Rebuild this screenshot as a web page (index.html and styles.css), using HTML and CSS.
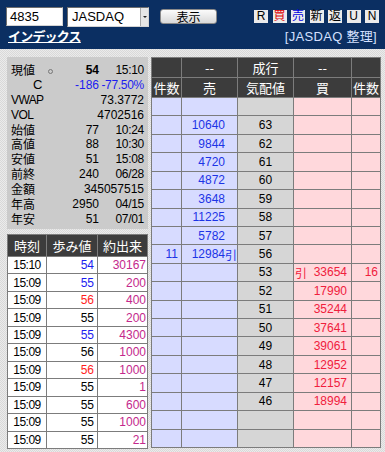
FILE: index.html
```html
<!DOCTYPE html>
<html lang="ja">
<head>
<meta charset="utf-8">
<title>4835 JASDAQ</title>
<link rel="stylesheet" href="styles.css">
</head>
<body>
<div class="topbar">
  <div class="row1">
    <div class="code">4835</div>
    <div class="select"><span class="val">JASDAQ</span><span class="arrow"></span></div>
    <div class="btn">表示</div>
    <div class="modes">
      <span class="mb">R</span>
      <span class="mb red">買</span>
      <span class="mb blue">売</span>
      <span class="mb">新</span>
      <span class="mb">返</span>
      <span class="mb">U</span>
      <span class="mb">N</span>
    </div>
  </div>
  <div class="row2">
    <span class="idx">インデックス</span>
    <span class="market">[JASDAQ 整理]</span>
  </div>
</div>

<div class="main">
  <div class="left">
    <div class="info">
      <div class="ir"><span class="lb">現値<span class="dot"></span></span><span class="iv b">54</span><span class="it">15:10</span></div>
      <div class="ir"><span class="lb ind">C</span><span class="iv blue">-186</span><span class="it blue">-77.50%</span></div>
      <div class="ir"><span class="lb lat">VWAP</span><span class="iv full">73.3772</span></div>
      <div class="ir"><span class="lb lat">VOL</span><span class="iv full">4702516</span></div>
      <div class="ir"><span class="lb">始値</span><span class="iv">77</span><span class="it">10:24</span></div>
      <div class="ir"><span class="lb">高値</span><span class="iv">88</span><span class="it">10:30</span></div>
      <div class="ir"><span class="lb">安値</span><span class="iv">51</span><span class="it">15:08</span></div>
      <div class="ir"><span class="lb">前終</span><span class="iv">240</span><span class="it">06/28</span></div>
      <div class="ir"><span class="lb">金額</span><span class="iv full">345057515</span></div>
      <div class="ir"><span class="lb">年高</span><span class="iv">2950</span><span class="it">04/15</span></div>
      <div class="ir"><span class="lb">年安</span><span class="iv">51</span><span class="it">07/01</span></div>
    </div>
    <div class="trades">
      <div class="th">時刻</div><div class="th">歩み値</div><div class="th">約出来</div>
      <div class="td t">15:10</div><div class="td p blue">54</div><div class="td v mag">30167</div>
      <div class="td t">15:09</div><div class="td p blue">55</div><div class="td v mag">200</div>
      <div class="td t">15:09</div><div class="td p red">56</div><div class="td v mag">400</div>
      <div class="td t">15:09</div><div class="td p">55</div><div class="td v mag">200</div>
      <div class="td t">15:09</div><div class="td p blue">55</div><div class="td v mag">4300</div>
      <div class="td t">15:09</div><div class="td p">56</div><div class="td v mag">1000</div>
      <div class="td t">15:09</div><div class="td p red">56</div><div class="td v mag">1000</div>
      <div class="td t">15:09</div><div class="td p">55</div><div class="td v mag">1</div>
      <div class="td t">15:09</div><div class="td p">55</div><div class="td v mag">600</div>
      <div class="td t">15:09</div><div class="td p">55</div><div class="td v mag">1000</div>
      <div class="td t">15:09</div><div class="td p">55</div><div class="td v mag">21</div>
    </div>
  </div>

  <div class="board">
    <div class="bh"></div><div class="bh">--</div><div class="bh">成行</div><div class="bh">--</div><div class="bh"></div>
    <div class="bh">件数</div><div class="bh">売</div><div class="bh">気配値</div><div class="bh">買</div><div class="bh">件数</div>

    <div class="sc"></div><div class="sv"></div><div class="pr"></div><div class="bv"></div><div class="bc"></div>
    <div class="sc"></div><div class="sv"><span>10640</span><i></i></div><div class="pr">63</div><div class="bv"></div><div class="bc"></div>
    <div class="sc"></div><div class="sv"><span>9844</span><i></i></div><div class="pr">62</div><div class="bv"></div><div class="bc"></div>
    <div class="sc"></div><div class="sv"><span>4720</span><i></i></div><div class="pr">61</div><div class="bv"></div><div class="bc"></div>
    <div class="sc"></div><div class="sv"><span>4872</span><i></i></div><div class="pr">60</div><div class="bv"></div><div class="bc"></div>
    <div class="sc"></div><div class="sv"><span>3648</span><i></i></div><div class="pr">59</div><div class="bv"></div><div class="bc"></div>
    <div class="sc"></div><div class="sv"><span>11225</span><i></i></div><div class="pr">58</div><div class="bv"></div><div class="bc"></div>
    <div class="sc"></div><div class="sv"><span>5782</span><i></i></div><div class="pr">57</div><div class="bv"></div><div class="bc"></div>
    <div class="sc">11</div><div class="sv"><span>12984</span><i>引</i></div><div class="pr">56</div><div class="bv"></div><div class="bc"></div>
    <div class="sc"></div><div class="sv"></div><div class="pr">53</div><div class="bv"><i>引</i><span>33654</span></div><div class="bc">16</div>
    <div class="sc"></div><div class="sv"></div><div class="pr">52</div><div class="bv"><i></i><span>17990</span></div><div class="bc"></div>
    <div class="sc"></div><div class="sv"></div><div class="pr">51</div><div class="bv"><i></i><span>35244</span></div><div class="bc"></div>
    <div class="sc"></div><div class="sv"></div><div class="pr">50</div><div class="bv"><i></i><span>37641</span></div><div class="bc"></div>
    <div class="sc"></div><div class="sv"></div><div class="pr">49</div><div class="bv"><i></i><span>39061</span></div><div class="bc"></div>
    <div class="sc"></div><div class="sv"></div><div class="pr">48</div><div class="bv"><i></i><span>12952</span></div><div class="bc"></div>
    <div class="sc"></div><div class="sv"></div><div class="pr">47</div><div class="bv"><i></i><span>12157</span></div><div class="bc"></div>
    <div class="sc"></div><div class="sv"></div><div class="pr">46</div><div class="bv"><i></i><span>18994</span></div><div class="bc"></div>
    <div class="sc"></div><div class="sv"></div><div class="pr"></div><div class="bv"></div><div class="bc"></div>
    <div class="sc"></div><div class="sv"></div><div class="pr"></div><div class="bv"></div><div class="bc"></div>
  </div>
</div>
</body>
</html>
```

FILE: styles.css
```css
* { box-sizing: border-box; }
html, body { margin: 0; padding: 0; }
body {
  width: 385px;
  height: 452px;
  overflow: hidden;
  font-family: "Liberation Sans", "Noto Sans CJK JP", sans-serif;
  font-size: 12px;
  color: #000;
  background-color: #e3e3e3;
  background-image: repeating-conic-gradient(#ebebeb 0 25%, #d9d9d9 0 50%);
  background-size: 2px 2px;
}

/* top bar */
.topbar {
  background: #0b2f62;
  height: 49px;
  padding: 7px 6px 0 6px;
}
.row1 {
  display: flex;
  align-items: flex-start;
  height: 20px;
}
.code {
  width: 57px;
  height: 19px;
  background: #fff;
  border: 1px solid;
  border-color: #6e6e6e #d4d4d4 #d4d4d4 #6e6e6e;
  font-size: 13px;
  line-height: 17px;
  padding-left: 3px;
}
.select {
  margin-left: 4px;
  width: 82px;
  height: 20px;
  background: #fff;
  border: 1px solid;
  border-color: #6e6e6e #d4d4d4 #d4d4d4 #6e6e6e;
  display: flex;
}
.select .val {
  flex: 1;
  font-size: 13px;
  line-height: 18px;
  padding-left: 4px;
}
.select .arrow {
  width: 8px;
  background: #e6e6e6;
  border-left: 1px solid #a8a8a8;
  display: flex;
  align-items: center;
  justify-content: center;
}
.select .arrow::after {
  content: "";
  border-left: 2px solid transparent;
  border-right: 2px solid transparent;
  border-top: 2px solid #222;
}
.btn {
  margin-left: 11px;
  margin-top: 2px;
  width: 57px;
  height: 15px;
  border: 1px solid #8a8a8a;
  border-radius: 3px;
  background: linear-gradient(#fbfbfb, #d9d9d9);
  font-family: "Noto Sans CJK JP", sans-serif;
  font-size: 12px;
  line-height: 13px;
  text-align: center;
}
.modes {
  margin-left: auto;
  margin-top: 3px;
  display: flex;
  gap: 4.5px;
}
.mb {
  width: 14px;
  height: 13px;
  background: #ebebeb;
  font-size: 12px;
  line-height: 13px;
  text-align: center;
  color: #000;
}
.mb.red { color: #e00000; }
.mb.blue { color: #0000e0; }

.row2 {
  display: flex;
  justify-content: space-between;
  align-items: baseline;
  padding: 0 2px 0 2px;
  line-height: 18px;
}
.idx {
  color: #fff;
  font-family: "Noto Sans CJK JP", sans-serif;
  font-weight: bold;
  font-size: 13px;
  letter-spacing: -0.8px;
  text-decoration: underline;
}
.market {
  color: #d4e0ff;
  font-size: 13px;
  letter-spacing: 0.3px;
}

/* main */
.main {
  display: flex;
  padding: 8px 0 0 7px;
  gap: 3px;
}
.left {
  width: 141px;
  display: flex;
  flex-direction: column;
  gap: 5px;
}
.info {
  height: 172px;
  background: #cbcbcb;
  padding: 6px 4px 0 4px;
}
.ir {
  display: grid;
  grid-template-columns: auto 1fr 45px;
  line-height: 14.9px;
  height: 14.9px;
  white-space: nowrap;
}
.lb {
  font-family: "Noto Sans CJK JP", sans-serif;
  font-size: 12px;
  line-height: 14.9px;
  display: flex;
  align-items: center;
}
.lb.lat { font-family: "Liberation Sans", sans-serif; letter-spacing: -0.6px; }
.lb.ind { padding-left: 22px; font-family: "Liberation Sans", sans-serif; font-size: 13px; }
.dot {
  width: 5px;
  height: 5px;
  border: 1px solid #777;
  border-radius: 50%;
  margin-left: 13px;
  margin-top: 3px;
}
.iv { text-align: right; }
.iv.full { grid-column: 2 / 4; }
.iv.b { font-weight: bold; }
.it { text-align: right; letter-spacing: -0.3px; }
.blue { color: #1c1cf0; }
.red { color: #ff1c1c; }
.mag { color: #c4288c; }

/* trades */
.trades {
  display: grid;
  grid-template-columns: 38px 50px 49px;
  grid-template-rows: 21px repeat(11, 1fr);
  height: 215px;
  gap: 1px;
  background: #7c7c7c;
  border: 1px solid #7c7c7c;
}
.th {
  background: #3c3c3c;
  color: #fff;
  font-family: "Noto Sans CJK JP", sans-serif;
  font-size: 13px;
  display: flex;
  align-items: center;
  justify-content: center;
}
.td {
  background: #fff;
  display: flex;
  align-items: center;
}
.td.t { justify-content: center; letter-spacing: -0.5px; }
.td.p { justify-content: flex-end; padding-right: 3px; }
.td.v { justify-content: flex-end; padding-right: 1px; }

/* board */
.board {
  width: 230px;
  display: grid;
  grid-template-columns: 29px 55px 55px 57px 28px;
  grid-template-rows: repeat(21, 1fr);
  height: 391px;
  gap: 1px;
  background: #7c7c7c;
  border: 1px solid #7c7c7c;
}
.bh {
  background: #3c3c3c;
  color: #fff;
  font-family: "Noto Sans CJK JP", sans-serif;
  font-size: 13px;
  display: flex;
  align-items: center;
  justify-content: center;
}
.sc, .sv, .pr, .bv, .bc {
  display: flex;
  align-items: center;
}
.sc {
  background: #d7dbff;
  color: #1c34e6;
  justify-content: flex-end;
  padding-right: 3px;
}
.sv {
  background: #d7dbff;
  color: #1c34e6;
  justify-content: flex-end;
  padding-right: 2px;
}
.sv i, .bv i {
  font-style: normal;
  font-family: "Noto Sans CJK JP", sans-serif;
  font-size: 12px;
  width: 10px;
  text-align: right;
}
.pr {
  background: #d6d6d6;
  justify-content: center;
}
.bv {
  background: #ffd8dc;
  color: #f0203c;
  justify-content: space-between;
  padding: 0 4px 0 1px;
}
.bv i { text-align: left; }
.bc {
  background: #ffd8dc;
  color: #f0203c;
  justify-content: flex-end;
  padding-right: 2px;
}
```
